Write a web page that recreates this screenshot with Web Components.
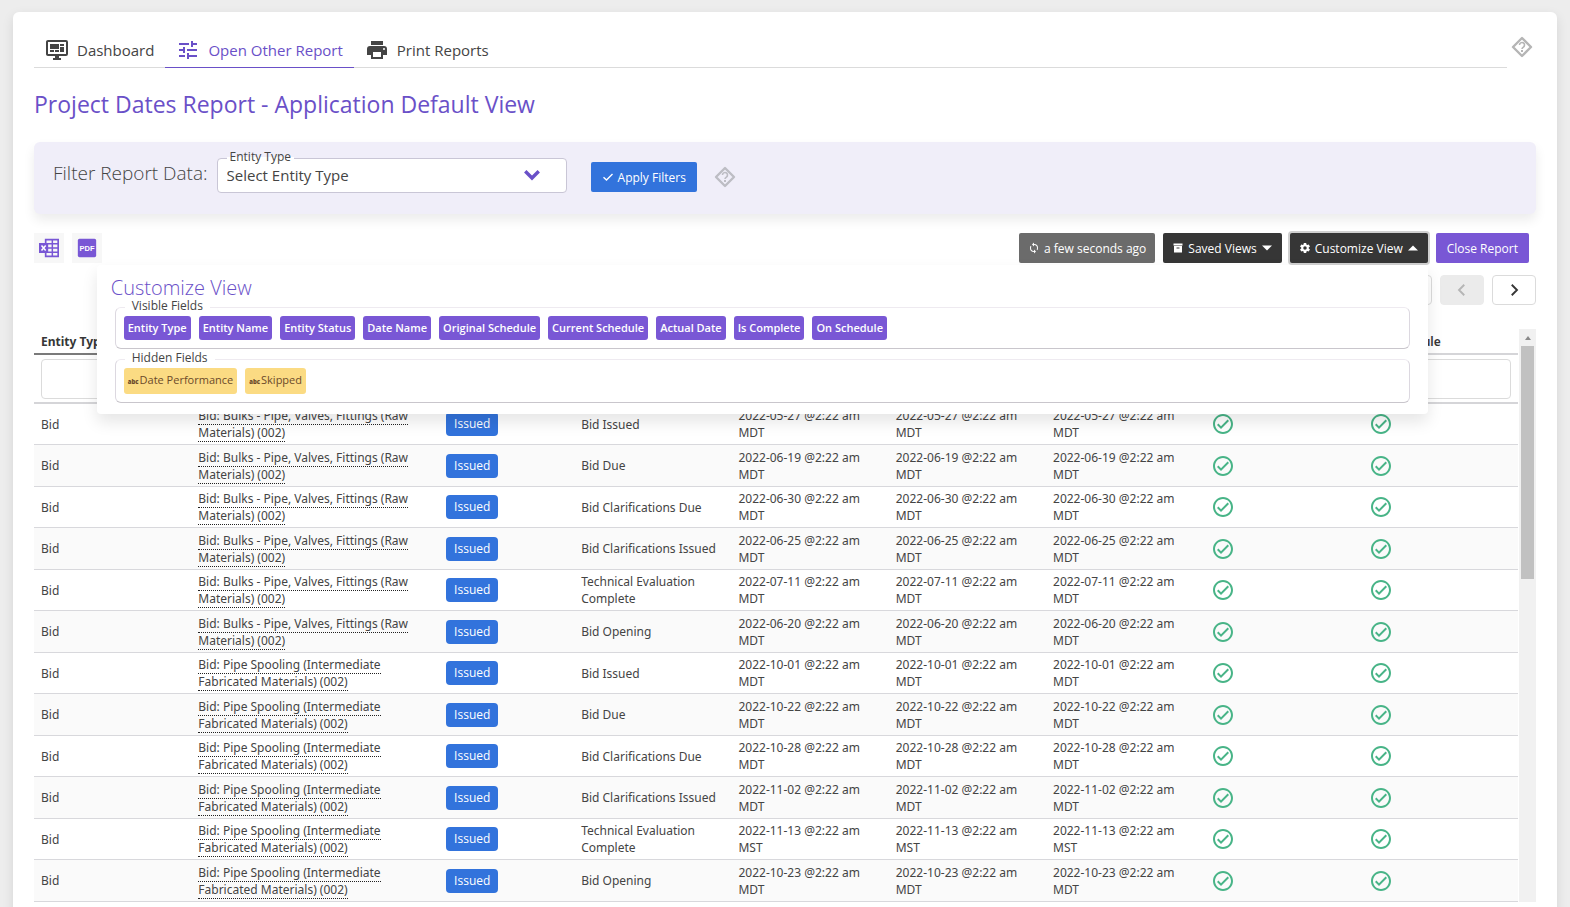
<!DOCTYPE html>
<html lang="en">
<head>
<meta charset="utf-8">
<title>Project Dates Report</title>
<style>
  body {
    margin: 0;
    background: #ededed;
    color: #444;
    font-family: "Open Sans", "Noto Sans", sans-serif;
    font-size: 12px;
    height: 100vh;
    overflow: hidden;
  }
</style>
</head>
<body>
<report-page>
  <report-tabs slot="tabs"></report-tabs>
  <span slot="title">Project Dates Report - Application Default View</span>
  <filter-bar></filter-bar>
  <report-toolbar></report-toolbar>
  <report-pager></report-pager>
  <report-table></report-table>
</report-page>

<script>
const ICONS = {
  dashboard: '<path d="M21,16V4H3V16H21M21,2A2,2 0 0,1 23,4V16A2,2 0 0,1 21,18H14V20H16V22H8V20H10V18H3C1.89,18 1,17.1 1,16V4C1,2.89 1.89,2 3,2H21M5,6H14V11H5V6M15,6H19V8H15V6M19,9V14H15V9H19M5,12H9V14H5V12M10,12H14V14H10V12Z"/>',
  tune: '<path d="M3,17V19H9V17H3M3,5V7H13V5H3M13,21V19H21V17H13V15H11V21H13M7,9V11H3V13H7V15H9V9H7M21,13V11H11V13H21M15,9H17V7H21V5H17V3H15V9Z"/>',
  printer: '<path d="M18,3H6V7H18M19,12A1,1 0 0,1 18,11A1,1 0 0,1 19,10A1,1 0 0,1 20,11A1,1 0 0,1 19,12M16,19H8V14H16M19,8H5A3,3 0 0,0 2,11V17H6V21H18V17H22V11A3,3 0 0,0 19,8Z"/>',
  help: '<path d="M12 3 21 12 12 21 3 12Z" fill="none" stroke="currentColor" stroke-width="2.400" stroke-linejoin="round"/><path d="M9.500 10a2.500 2.500 0 1 1 4 2c-1 .7-1.500 1-1.500 2" fill="none" stroke="currentColor" stroke-width="1.600"/><path d="M11 15h2v2h-2z"/>',
  check: '<path d="M3 12.500 9 18 21 6" fill="none" stroke="currentColor" stroke-width="2.800"/>',
  done: '<path d="M12 2C6.500 2 2 6.500 2 12S6.500 22 12 22 22 17.500 22 12 17.500 2 12 2M12 20C7.590 20 4 16.410 4 12S7.590 4 12 4 20 7.590 20 12 16.410 20 12 20M16.590 7.580L10 14.170L7.410 11.590L6 13L10 17L18 9L16.590 7.580Z"/>',
  sync: '<path d="M12,18A6,6 0 0,1 6,12C6,11 6.25,10.03 6.7,9.2L5.24,7.74C4.46,8.97 4,10.43 4,12A8,8 0 0,0 12,20V23L16,19L12,15M12,4V1L8,5L12,9V6A6,6 0 0,1 18,12C18,13 17.75,13.97 17.3,14.8L18.76,16.26C19.54,15.03 20,13.57 20,12A8,8 0 0,0 12,4Z"/>',
  archive: '<path d="M3,3H21V7H3V3M4,8H20V21H4V8M9.5,11A0.5,0.5 0 0,0 9,11.5V13H15V11.5A0.5,0.5 0 0,0 14.5,11H9.5Z"/>',
  cog: '<path d="M12,15.5A3.5,3.5 0 0,1 8.5,12A3.5,3.5 0 0,1 12,8.5A3.5,3.5 0 0,1 15.5,12A3.5,3.5 0 0,1 12,15.5M19.43,12.97C19.47,12.65 19.5,12.33 19.5,12C19.5,11.67 19.47,11.34 19.43,11L21.54,9.37C21.73,9.22 21.78,8.95 21.66,8.73L19.66,5.27C19.54,5.05 19.27,4.96 19.05,5.05L16.56,6.05C16.04,5.66 15.5,5.32 14.87,5.07L14.5,2.42C14.46,2.18 14.25,2 14,2H10C9.75,2 9.54,2.18 9.5,2.42L9.13,5.07C8.5,5.32 7.96,5.66 7.44,6.05L4.95,5.05C4.73,4.96 4.46,5.05 4.34,5.27L2.34,8.73C2.21,8.95 2.27,9.22 2.46,9.37L4.57,11C4.53,11.34 4.5,11.67 4.5,12C4.5,12.33 4.53,12.65 4.57,12.97L2.46,14.63C2.27,14.78 2.21,15.05 2.34,15.27L4.34,18.73C4.46,18.95 4.73,19.03 4.95,18.95L7.44,17.94C7.96,18.34 8.5,18.68 9.13,18.93L9.5,21.58C9.54,21.82 9.75,22 10,22H14C14.25,22 14.46,21.82 14.5,21.58L14.87,18.93C15.5,18.67 16.04,18.34 16.56,17.94L19.05,18.95C19.27,19.03 19.54,18.95 19.66,18.73L21.66,15.27C21.78,15.05 21.73,14.78 21.54,14.63L19.43,12.97Z"/>',
  down: '<path d="M2 7H22L12 17Z"/>',
  up: '<path d="M2 17H22L12 7Z"/>',
  chevron: '<path d="M3 7 12 16 21 7" fill="none" stroke="currentColor" stroke-width="4.500"/>',
  left: '<path d="M15 5 8 12 15 19" fill="none" stroke="currentColor" stroke-width="2.500"/>',
  right: '<path d="M9 5 16 12 9 19" fill="none" stroke="currentColor" stroke-width="2.500"/>',
  excel: '<path d="M8 2H23V22H8Z" fill="none" stroke="currentColor" stroke-width="2"/><path d="M8 7H23M8 12H23M8 17H23M16 2V22" stroke="currentColor" stroke-width="1.800"/><path d="M0 6H11V18H0Z"/><path d="M3 9 8 15M8 9 3 15" stroke="#fff" stroke-width="1.800"/>',
  pdf: '<rect x="1" y="1" width="22" height="22" rx="2"/><text x="12" y="15" fill="#fff" font-size="9" font-weight="800" text-anchor="middle">PDF</text>'
};

class ReportIcon extends HTMLElement {
  constructor() {
    super();
    this.attachShadow({ mode: 'open' });
  }

  connectedCallback() {
    this.shadowRoot.innerHTML = `
<style>
:host { display: inline-flex; width: 24px; height: 24px; flex: none; }
svg { width: 100%; height: 100%; fill: currentColor; }
</style>
<svg viewBox="0 0 24 24" aria-hidden="true">${ICONS[this.getAttribute('name')]}</svg>`;
  }
}
customElements.define('report-icon', ReportIcon);

// Small helper for the elements whose markup never changes
function define(name, html) {
  const template = document.createElement('template');
  template.innerHTML = html;
  customElements.define(name, class extends HTMLElement {
    constructor() {
      super();
      this.attachShadow({ mode: 'open' }).appendChild(template.content.cloneNode(true));
    }
  });
}

define('report-page', `
<style>
:host {
  display: block;
  margin: 12px 13px 0;
  padding: 21px;
  background: #fff;
  border-radius: 6px;
  box-shadow: 0 4px 12px rgba(10, 10, 10, .1);
}
header { display: flex; align-items: flex-start; gap: 3px; padding-right: 2px; }
::slotted(report-tabs) { flex: 1; }
header report-icon { margin-top: 2px; color: #b5b5b5; }
h1 {
  margin: 18px 0 20px;
  color: #6a50c8;
  font-size: 23px;
  font-weight: 400;
  line-height: 36px;
}
</style>
<header>
  <slot name="tabs"></slot>
  <report-icon name="help"></report-icon>
</header>
<h1><slot name="title"></slot></h1>
<slot></slot>
`);

define('report-tabs', `
<style>
:host { display: block; border-bottom: 1px solid #dbdbdb; }
nav { display: flex; }
a {
  display: flex;
  align-items: center;
  gap: 8px;
  height: 34px;
  padding: 0 11px;
  margin-bottom: -1px;
  border-bottom: 1px solid transparent;
  color: #444;
  font-size: 15px;
  text-decoration: none;
}
a.active { color: #6a50c8; border-color: #6a50c8; }
</style>
<nav>
  <a href="#dashboard"><report-icon name="dashboard"></report-icon>Dashboard</a>
  <a href="#open" class="active"><report-icon name="tune"></report-icon>Open Other Report</a>
  <a href="#print"><report-icon name="printer"></report-icon>Print Reports</a>
</nav>
`);

define('report-button', `
<style>
:host { display: inline-block; --bg: #363636; }
:host([kind="primary"]) { --bg: #3273dc; }
:host([kind="purple"]) { --bg: #7957d5; }
:host([kind="muted"]) { --bg: #6b6b6b; }
:host([focused]) button { box-shadow: 0 0 0 2px #d0d0d0; }
button {
  display: flex;
  align-items: center;
  gap: 4px;
  height: 30px;
  padding: 0 9px;
  border: 0;
  border-radius: 2px;
  background: var(--bg);
  color: #fff;
  font: inherit;
  white-space: nowrap;
}
:host([kind="primary"]) button, :host([kind="purple"]) button { padding: 0 11px; }
::slotted(report-icon) { width: 12px; height: 12px; }
</style>
<button type="button"><slot></slot></button>
`);

define('filter-bar', `
<style>
:host {
  display: flex;
  align-items: flex-start;
  height: 56px;
  padding: 16px 19px 0;
  background: #f0eef9;
  border-radius: 6px;
  box-shadow: 0 6px 12px rgba(10, 10, 10, .08);
}
h2 { margin: 0 9px 0 0; font-size: 19px; font-weight: 300; line-height: 30px; }
.field { position: relative; width: 350px; }
label {
  position: absolute;
  left: 10px;
  top: -9px;
  padding: 0 3px;
  background: linear-gradient(#f0eef9 50%, #fff 50%);
  line-height: 16px;
}
select {
  appearance: none;
  width: 100%;
  height: 35px;
  padding: 0 9px 2px;
  border: 1px solid #c9c6d6;
  border-radius: 4px;
  background: #fff;
  color: inherit;
  font: inherit;
  font-size: 15px;
}
.field report-icon {
  position: absolute;
  right: 26px;
  top: 8px;
  width: 18px;
  height: 18px;
  color: #6a50c8;
  pointer-events: none;
}
report-button { margin: 4px 16px 0 24px; }
.help { margin-top: 7px; color: #bdbdc4; }
</style>
<h2>Filter Report Data:</h2>
<div class="field">
  <select id="type"><option>Select Entity Type</option></select>
  <label for="type">Entity Type</label>
  <report-icon name="chevron"></report-icon>
</div>
<report-button kind="primary"><report-icon name="check"></report-icon>Apply Filters</report-button>
<report-icon class="help" name="help"></report-icon>
`);

define('report-toolbar', `
<style>
:host { display: flex; align-items: center; gap: 8px; margin-top: 19px; padding-right: 7px; }
.export {
  display: flex;
  align-items: center;
  justify-content: center;
  width: 30px;
  height: 30px;
  padding: 0;
  border: 0;
  background: #f7f7f7;
  color: #7957d5;
}
.export report-icon { width: 20px; height: 20px; }
.space { flex: 1; }
.dropdown { position: relative; }
customize-panel { position: absolute; z-index: 2; top: 32px; right: 0; width: calc(100vw - 239px); }
</style>
<button class="export" aria-label="Export to Excel"><report-icon name="excel"></report-icon></button>
<button class="export" aria-label="Export to PDF"><report-icon name="pdf"></report-icon></button>
<div class="space"></div>
<report-button kind="muted"><report-icon name="sync"></report-icon>a few seconds ago</report-button>
<report-button><report-icon name="archive"></report-icon>Saved Views<report-icon name="down"></report-icon></report-button>
<div class="dropdown">
  <report-button focused><report-icon name="cog"></report-icon>Customize View<report-icon name="up"></report-icon></report-button>
  <customize-panel></customize-panel>
</div>
<report-button kind="purple">Close Report</report-button>
`);

define('field-chip', `
<style>
:host {
  padding: 0 4px;
  border-radius: 3px;
  background: #7957d5;
  color: #fff;
  font-size: 11px;
  font-weight: 600;
  line-height: 24px;
  white-space: nowrap;
}
:host([off]) { background: #fbdb83; color: #6b4a2a; font-weight: 400; }
small { display: none; font-size: 6px; font-weight: 800; margin-right: 1px; }
:host([off]) small { display: inline; }
</style>
<small>abc</small><slot></slot>
`);

define('customize-panel', `
<style>
:host {
  display: block;
  box-sizing: border-box;
  padding: 10px 18px 11px;
  background: #fff;
  border-radius: 4px;
  box-shadow: 0 8px 16px rgba(10, 10, 10, .1);
}
h2 { margin: 0 0 7px -4px; color: #6a50c8; font-size: 20px; font-weight: 300; line-height: 25px; }
section { position: relative; margin-bottom: 10px; }
h3 {
  position: absolute;
  left: 10px;
  top: -7px;
  margin: 0;
  padding: 0 7px;
  background: #fff;
  font-size: 12px;
  font-weight: 400;
  line-height: 12px;
}
.fields {
  display: flex;
  gap: 8px;
  padding: 8px;
  border: 1px solid #dcd8e0;
  border-top-color: #eeeaf0;
  border-bottom-color: #c9c6cc;
  border-radius: 6px;
}
section:last-child { margin-bottom: 0; }
</style>
<h2>Customize View</h2>
<section>
  <div class="fields">
    <field-chip>Entity Type</field-chip>
    <field-chip>Entity Name</field-chip>
    <field-chip>Entity Status</field-chip>
    <field-chip>Date Name</field-chip>
    <field-chip>Original Schedule</field-chip>
    <field-chip>Current Schedule</field-chip>
    <field-chip>Actual Date</field-chip>
    <field-chip>Is Complete</field-chip>
    <field-chip>On Schedule</field-chip>
  </div>
  <h3>Visible Fields</h3>
</section>
<section>
  <div class="fields">
    <field-chip off>Date Performance</field-chip>
    <field-chip off>Skipped</field-chip>
  </div>
  <h3>Hidden Fields</h3>
</section>
`);

define('report-pager', `
<style>
:host { display: flex; justify-content: flex-end; gap: 8px; margin-top: 12px; }
button, input {
  box-sizing: border-box;
  width: 44px;
  height: 30px;
  border: 1px solid #dbdbdb;
  border-radius: 4px;
  background: #fff;
  color: #363636;
}
button { display: flex; align-items: center; justify-content: center; padding: 0; }
button:disabled { background: #ebebeb; border-color: #ebebeb; color: #b5b5b5; }
report-icon { width: 18px; height: 18px; }
</style>
<input aria-label="Page">
<button disabled aria-label="Previous page"><report-icon name="left"></report-icon></button>
<button aria-label="Next page"><report-icon name="right"></report-icon></button>
`);

const COLUMNS = ['Entity Type', 'Entity Name', 'Entity Status', 'Date Name', 'Original Schedule',
  'Current Schedule', 'Actual Date', 'Is Complete', 'On Schedule'];

const BULKS = 'Bid: Bulks - Pipe, Valves, Fittings (Raw Materials) (002)';
const SPOOLING = 'Bid: Pipe Spooling (Intermediate Fabricated Materials) (002)';

const ROWS = [
  [BULKS, 'Bid Issued', '2022-05-27 @2:22 am MDT'],
  [BULKS, 'Bid Due', '2022-06-19 @2:22 am MDT'],
  [BULKS, 'Bid Clarifications Due', '2022-06-30 @2:22 am MDT'],
  [BULKS, 'Bid Clarifications Issued', '2022-06-25 @2:22 am MDT'],
  [BULKS, 'Technical Evaluation Complete', '2022-07-11 @2:22 am MDT'],
  [BULKS, 'Bid Opening', '2022-06-20 @2:22 am MDT'],
  [SPOOLING, 'Bid Issued', '2022-10-01 @2:22 am MDT'],
  [SPOOLING, 'Bid Due', '2022-10-22 @2:22 am MDT'],
  [SPOOLING, 'Bid Clarifications Due', '2022-10-28 @2:22 am MDT'],
  [SPOOLING, 'Bid Clarifications Issued', '2022-11-02 @2:22 am MDT'],
  [SPOOLING, 'Technical Evaluation Complete', '2022-11-13 @2:22 am MST'],
  [SPOOLING, 'Bid Opening', '2022-10-23 @2:22 am MDT']
];

class ReportTable extends HTMLElement {
  constructor() {
    super();
    this.attachShadow({ mode: 'open' });
  }

  connectedCallback() {
    const heads = COLUMNS.map(name => `<th scope="col">${name}</th>`).join('');
    const inputs = COLUMNS.map(name => `<td><input aria-label="Filter ${name}"></td>`).join('');
    const rows = ROWS.map(([name, date, when]) => `
      <tr>
        <td>Bid</td>
        <td><a href="#bid">${name}</a></td>
        <td><span class="tag">Issued</span></td>
        <td>${date}</td>
        <td>${when}</td>
        <td>${when}</td>
        <td>${when}</td>
        <td><report-icon name="done"></report-icon></td>
        <td><report-icon name="done"></report-icon></td>
      </tr>`).join('');

    this.shadowRoot.innerHTML = `
<style>
:host { display: flex; margin-top: 24px; }
table { flex: 1; border-collapse: separate; border-spacing: 0; table-layout: fixed; font-family: "Noto Sans", sans-serif; }
col { width: 10.6%; }
col.name { width: 16.7%; }
col.status { width: 9.1%; }
th, td { box-sizing: border-box; padding: 0 7px; text-align: left; }
th { height: 26px; border-bottom: 2px solid #d5d5d8; color: #363636; font-weight: 600; white-space: nowrap; }
th:first-child { border-color: #7a7a7a; font-weight: 700; }
thead td { height: 49px; border-bottom: 2px solid #d5d5d8; }
input {
  display: block;
  box-sizing: border-box;
  width: 100%;
  height: 40px;
  border: 1px solid #dbdbdb;
  border-radius: 4px;
  background: #fff;
}
tbody td { height: 41px; border-bottom: 1px solid #d8d8dc; line-height: 17px; }
tbody tr:nth-child(even) td { height: 42px; background: #fafafa; }
a { color: inherit; text-decoration: none; border-bottom: 1px dotted #222; }
.tag {
  display: inline-block;
  padding: 0 8px;
  border-radius: 4px;
  background: #3273dc;
  color: #fff;
  font-family: "Open Sans", sans-serif;
  line-height: 24px;
}
td report-icon { display: flex; margin-left: 1px; color: #48b487; }
.scroll {
  flex: none;
  width: 17px;
  background: #f1f1f1;
  margin-left: 1px;
}
.arrow { width: 6px; height: 17px; margin: 0 auto; display: block; }
.thumb { width: 13px; height: 233px; margin: 0 auto; background: #c1c1c1; }
</style>
<table>
  <colgroup><col><col class="name"><col class="status"><col><col><col><col><col><col></colgroup>
  <thead>
    <tr>${heads}</tr>
    <tr>${inputs}</tr>
  </thead>
  <tbody>${rows}</tbody>
</table>
<div class="scroll">
  <svg class="arrow" viewBox="0 0 6 17"><path d="M0 11 3 7 6 11Z" fill="#8a8a8a"/></svg>
  <div class="thumb"></div>
</div>`;
  }
}
customElements.define('report-table', ReportTable);
</script>
</body>
</html>
